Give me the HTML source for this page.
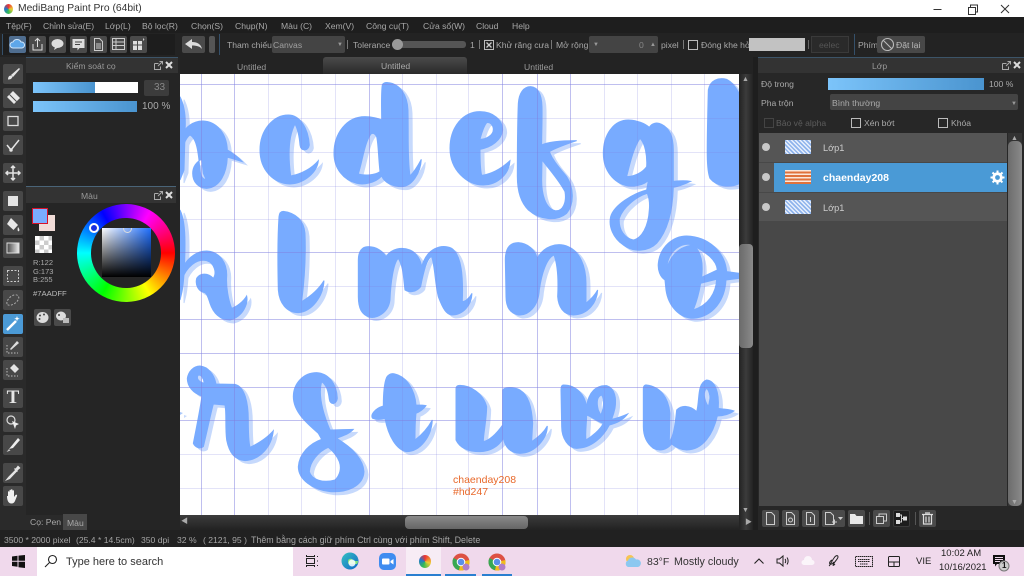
<!DOCTYPE html>
<html><head><meta charset="utf-8">
<style>
html,body{margin:0;padding:0;width:1024px;height:576px;overflow:hidden;background:#252525}
body{position:relative;font-family:"Liberation Sans","Noto Sans CJK SC",sans-serif;font-size:8.6px;color:#a8a8a8}
.a{position:absolute}
.t{position:absolute;white-space:nowrap;line-height:12px}
.b{position:absolute;background:#4a4a4a;border-radius:2px;width:17px;height:17px}
.tb{position:absolute;left:3px;width:20px;height:20px;background:#484848;border-radius:2px}
.tb svg,.b svg{position:absolute;left:0;top:0;width:100%;height:100%}
.sep{position:absolute;color:#888}
.bar{position:absolute;background:linear-gradient(to right,#7cc4fa,#4a94cf)}
.chk{position:absolute;width:8px;height:8px;border:1px solid #bbb}
.row{position:absolute;left:759px;width:248px;background:#555}
.dot{position:absolute;width:8px;height:8px;border-radius:50%;background:#c8c8c8}
.th{position:absolute;left:785px;width:26px;height:14px;background:repeating-linear-gradient(45deg,#8fb4ec 0 1.5px,#e9f0fc 1.5px 3px)}
svg{display:block}
</style></head><body>

<!-- title -->
<div class="a" style="left:0;top:0;width:1024px;height:17px;background:#fff"></div>
<div class="a" style="left:4px;top:4px;width:9px;height:10px;border-radius:50%;background:conic-gradient(#e33,#ec3 25%,#3b5 50%,#27c 75%,#e33)"></div>
<div class="t" style="left:18px;top:3px;color:#333;font-size:10.300px">MediBang Paint Pro (64bit)</div>
<svg class="a" style="left:930px;top:2px" width="90" height="14" fill="none" stroke="#333"><path d="M3.500 7.500h8"/><path d="M38.500 5.500h7v7h-7zM40.500 5V3h7v7h-2"/><path d="M71 3l8 8M79 3l-8 8"/></svg>

<!-- menu -->
<div class="a" style="left:0;top:17px;width:1024px;height:16px;background:#1e1e1e"></div>
<div class="t" style="left:6px;top:20px">Tệp(F)</div>
<div class="t" style="left:43px;top:20px">Chỉnh sửa(E)</div>
<div class="t" style="left:105px;top:20px">Lớp(L)</div>
<div class="t" style="left:142px;top:20px">Bộ lọc(R)</div>
<div class="t" style="left:191px;top:20px">Chọn(S)</div>
<div class="t" style="left:235px;top:20px">Chụp(N)</div>
<div class="t" style="left:281px;top:20px">Màu (C)</div>
<div class="t" style="left:325px;top:20px">Xem(V)</div>
<div class="t" style="left:366px;top:20px">Công cụ(T)</div>
<div class="t" style="left:423px;top:20px">Cửa sổ(W)</div>
<div class="t" style="left:476px;top:20px">Cloud</div>
<div class="t" style="left:512px;top:20px">Help</div>

<!-- toolbar -->
<div class="a" style="left:0;top:33px;width:1024px;height:24px;background:#232323"></div>
<div class="a" style="left:2px;top:34px;width:172px;height:21px;border-left:1px solid #35506a;background:#1d1d1d"></div>
<div class="b" style="left:9px;top:36px;background:#4f6d8f"><svg viewBox="0 0 17 17"><path d="M4 12a3 3 0 0 1 0-6 4.500 4.500 0 0 1 8 0 3 3 0 0 1 1 6z" fill="#5ea6e8" stroke="#cfe4f8"/></svg></div>
<div class="b" style="left:29px;top:36px"><svg viewBox="0 0 17 17" fill="none" stroke="#ddd"><path d="M4 8v6h9V8M8.500 11V3M6 5l2.500-2.500L11 5"/></svg></div>
<div class="b" style="left:49px;top:36px"><svg viewBox="0 0 17 17"><ellipse cx="8.500" cy="7.500" rx="6" ry="4.500" fill="#ddd"/><path d="M6 11l-1 3 4-2.500z" fill="#ddd"/></svg></div>
<div class="b" style="left:70px;top:36px"><svg viewBox="0 0 17 17"><path d="M2.500 3h12v9h-5l-2 2.500V12h-5z" fill="#ddd"/><path d="M5 6h7M5 8.500h5" stroke="#444"/></svg></div>
<div class="b" style="left:90px;top:36px"><svg viewBox="0 0 17 17" fill="none" stroke="#ccc"><path d="M4.500 2.500h5l3 3v9h-8zM6 8h5M6 10h5M6 12h5"/></svg></div>
<div class="b" style="left:110px;top:36px"><svg viewBox="0 0 17 17" fill="none" stroke="#ccc"><path d="M2.500 2.500h12v11h-12zM2.500 6h12M2.500 9.500h12M6 2.500v11"/></svg></div>
<div class="b" style="left:130px;top:36px"><svg viewBox="0 0 17 17"><path d="M3 5h4v3.500H3zM8 5h4v3.500H8zM3 9.500h4V14H3zM8 9.500h4V14H8z" fill="#ddd"/><path d="M13 2l1.500 1.500-1.500 1.500z" fill="#ccc"/></svg></div>
<div class="b" style="left:182px;top:36px;width:23px"><svg viewBox="0 0 23 17"><path d="M3 8l7-5v3c5 0 9 2 10 7-2-2.500-5-3.500-10-3.500V13z" fill="#ddd"/></svg></div>
<div class="a" style="left:209px;top:36px;width:6px;height:17px;background:#555;border-radius:2px"></div>
<div class="a" style="left:219px;top:34px;width:1px;height:21px;background:#35506a"></div>
<div class="t" style="left:227px;top:39px">Tham chiếu</div>
<div class="a" style="left:272px;top:36px;width:73px;height:17px;background:#444;border-radius:2px"></div>
<div class="t" style="left:273px;top:39px;color:#a0a0a0">Canvas</div>
<div class="t" style="left:337px;top:39px;font-size:6px;color:#999">▼</div>
<div class="a" style="left:347px;top:40px;width:1px;height:9px;background:#777"></div>
<div class="t" style="left:353px;top:39px">Tolerance</div>
<div class="a" style="left:392px;top:41px;width:74px;height:7px;background:#555;border-radius:3px"></div>
<div class="a" style="left:392px;top:39px;width:11px;height:11px;background:#999;border-radius:50%"></div>
<div class="t" style="left:470px;top:39px">1</div>
<div class="a" style="left:479px;top:40px;width:1px;height:9px;background:#777"></div>
<div class="chk" style="left:484px;top:40px"></div>
<svg class="a" style="left:484px;top:40px" width="10" height="10"><path d="M2.500 2.500l5 5M7.500 2.500l-5 5" stroke="#ccc" stroke-width="1.300"/></svg>
<div class="t" style="left:496px;top:39px">Khử răng cưa</div>
<div class="a" style="left:551px;top:40px;width:1px;height:9px;background:#777"></div>
<div class="t" style="left:556px;top:39px">Mở rộng</div>
<div class="a" style="left:589px;top:36px;width:69px;height:17px;background:#444;border-radius:2px"></div>
<div class="t" style="left:593px;top:39px;font-size:6px;color:#999">▼</div>
<div class="t" style="left:639px;top:39px;color:#888">0</div>
<div class="t" style="left:650px;top:39px;font-size:6px;color:#999">▲</div>
<div class="t" style="left:661px;top:39px">pixel</div>
<div class="a" style="left:683px;top:40px;width:1px;height:9px;background:#777"></div>
<div class="chk" style="left:688px;top:40px"></div>
<div class="t" style="left:701px;top:39px">Đóng khe hở</div>
<div class="a" style="left:749px;top:38px;width:56px;height:13px;background:#c2c2c2"></div>
<div class="a" style="left:808px;top:40px;width:1px;height:9px;background:#666"></div>
<div class="a" style="left:811px;top:36px;width:38px;height:17px;background:#2a2a2a;border:1px solid #3a3a3a;box-sizing:border-box"></div>
<div class="t" style="left:819px;top:39px;color:#555">eelec</div>
<div class="a" style="left:854px;top:34px;width:1px;height:21px;background:#35506a"></div>
<div class="t" style="left:858px;top:39px">Phím</div>
<div class="a" style="left:877px;top:36px;width:48px;height:17px;background:#484848;border-radius:2px"></div>
<svg class="a" style="left:880px;top:37px" width="15" height="15" fill="none" stroke="#bbb" stroke-width="1.100"><circle cx="7.500" cy="7.500" r="6"/><path d="M3.500 3.500l8 8"/></svg>
<div class="t" style="left:896px;top:39px;color:#bbb">Đặt lại</div>

<!-- left toolbox bg -->
<div class="a" style="left:0;top:57px;width:26px;height:473px;background:#2a2a2a"></div>

<div class="tb" style="top:64px"><svg viewBox="0 0 20 20"><path d="M16 4L8 11l2 2 7-8z" fill="#e4e4e4"/><path d="M8 11.500c-2 0-3 1.500-3 4 2 0 4-.5 4.500-3z" fill="#e4e4e4"/></svg></div>
<div class="tb" style="top:88px"><svg viewBox="0 0 20 20"><path d="M10 3l7 7-6 6-7-7z" fill="#e8e8e8"/><path d="M6.500 6.500l7 7" stroke="#484848"/></svg></div>
<div class="tb" style="top:111px"><svg viewBox="0 0 20 20"><path d="M5 5.500h10v9H5z" fill="none" stroke="#ddd" stroke-width="1.300"/></svg></div>
<div class="tb" style="top:135px"><svg viewBox="0 0 20 20" fill="none" stroke="#e4e4e4" stroke-width="1.500"><path d="M4 10l4 5L16 5"/><circle cx="8" cy="15" r="1" fill="#ddd"/></svg></div>
<div class="tb" style="top:163px"><svg viewBox="0 0 20 20" fill="none" stroke="#e4e4e4" stroke-width="1.500"><path d="M10 3v14M3 10h14M8 5l2-2 2 2M8 15l2 2 2-2M5 8l-2 2 2 2M15 8l2 2-2 2"/></svg></div>
<div class="tb" style="top:191px"><svg viewBox="0 0 20 20"><path d="M5 5h10v10H5z" fill="#e4e4e4"/></svg></div>
<div class="tb" style="top:215px"><svg viewBox="0 0 20 20"><path d="M8 3l7 7-4.500 5L4 9z" fill="#e8e8e8"/><path d="M15 12c1 1.500 2 3 1 4s-2-.5-1-4z" fill="#e8e8e8"/></svg></div>
<div class="tb" style="top:238px"><svg viewBox="0 0 20 20"><defs><linearGradient id="g1"><stop offset="0" stop-color="#444"/><stop offset="1" stop-color="#eee"/></linearGradient></defs><rect x="4" y="5" width="12" height="10" fill="url(#g1)" stroke="#ddd"/></svg></div>
<div class="tb" style="top:266px"><svg viewBox="0 0 20 20"><path d="M4.500 4.500h11v11h-11z" fill="none" stroke="#ccc" stroke-dasharray="2 1.500"/></svg></div>
<div class="tb" style="top:290px"><svg viewBox="0 0 20 20"><path d="M4 14c-1-3 3-8 7-9 4-1 6 2 4 5-2 4-9 7-11 4z" fill="none" stroke="#aaa" stroke-dasharray="2 1.500"/></svg></div>
<div class="tb" style="top:314px;background:#4b9ad6"><svg viewBox="0 0 20 20"><path d="M4 16L13 7" stroke="#fff" stroke-width="2.500"/><path d="M14 2l.7 2 2 .7-2 .7-.7 2-.7-2-2-.7 2-.7z" fill="#fff"/></svg></div>
<div class="tb" style="top:337px"><svg viewBox="0 0 20 20"><path d="M7 12l7-8 2 2-8 7z" fill="#ddd"/><path d="M4 8v8h11" fill="none" stroke="#bbb" stroke-dasharray="1.500 1.500"/></svg></div>
<div class="tb" style="top:360px"><svg viewBox="0 0 20 20"><path d="M11 4l5 5-4 4-5-5z" fill="#e4e4e4"/><path d="M4 8v8h11" fill="none" stroke="#bbb" stroke-dasharray="1.500 1.500"/></svg></div>
<div class="tb" style="top:388px"><div class="a" style="left:3px;top:0;width:14px;text-align:center;font:bold 19px/20px 'Liberation Serif',serif;color:#e6e6e6">T</div></div>
<div class="tb" style="top:412px"><svg viewBox="0 0 20 20"><circle cx="8" cy="8" r="4" fill="none" stroke="#ddd" stroke-width="1.200"/><path d="M9 9l7 3-3 1.500L12 17z" fill="#eee"/></svg></div>
<div class="tb" style="top:435px"><svg viewBox="0 0 20 20"><path d="M15 3l2 2-7 8-4 1z" fill="#eee"/><path d="M6 14l-2.500 3 4-1.500" fill="#ccc"/></svg></div>
<div class="tb" style="top:463px"><svg viewBox="0 0 20 20" fill="none" stroke="#e4e4e4" stroke-width="1.300"><path d="M13 7l-7 7-2 2.500 2.500-1 7-7.500"/><path d="M11.500 5.500l3 3M13 6l2-2.500 1.500 1.500L14 7" fill="#e4e4e4"/></svg></div>
<div class="tb" style="top:486px"><svg viewBox="0 0 20 20"><path d="M5 10V6c0-1 1.500-1 1.500 0v3V4.500c0-1 1.500-1 1.500 0V9V4c0-1 1.500-1 1.500 0v5V5c0-1 1.500-1 1.500 0v6l1.500-2c1-1 2 0 1.500 1l-2 5c-.5 1.500-2 2.500-3.500 2.500-3 0-4.500-3-4.500-7.500z" fill="#f0f0f0"/></svg></div>

<!-- left panels -->
<div class="a" style="left:26px;top:57px;width:152px;height:473px;background:#252525"></div>
<div class="a" style="left:26px;top:57px;width:152px;height:16px;background:#333;border-top:1px solid #3c5468;box-sizing:border-box"></div>
<div class="t" style="left:66px;top:60px;color:#999">Kiểm soát cọ</div>
<svg class="a" style="left:153px;top:60px" width="22" height="11"><path d="M1.500 3.500h4M1.500 3.500v6h6v-3M5 6l4-4M6.500 1.500h3v3" fill="none" stroke="#aaa"/><path d="M13 2l6 6M19 2l-6 6" stroke="#ddd" stroke-width="2"/></svg>
<div class="a" style="left:33px;top:82px;width:105px;height:11px;background:#fff"></div>
<div class="bar" style="left:33px;top:82px;width:62px;height:11px"></div>
<div class="a" style="left:144px;top:80px;width:25px;height:16px;background:#3c3c3c;border-radius:2px"></div>
<div class="t" style="left:154px;top:82px;color:#888;font-size:10px">33</div>
<div class="bar" style="left:33px;top:101px;width:104px;height:11px"></div>
<div class="t" style="left:142px;top:101px;font-size:10px;color:#aaa">100 %</div>

<div class="a" style="left:26px;top:186px;width:150px;height:17px;background:#333;border-top:1px solid #4a6478;box-sizing:border-box"></div>
<div class="t" style="left:81px;top:190px;color:#999">Màu</div>
<svg class="a" style="left:153px;top:190px" width="22" height="11"><path d="M1.500 3.500h4M1.500 3.500v6h6v-3M5 6l4-4M6.500 1.500h3v3" fill="none" stroke="#aaa"/><path d="M13 2l6 6M19 2l-6 6" stroke="#ddd" stroke-width="2"/></svg>

<div class="a" style="left:39px;top:215px;width:16px;height:16px;background:#f1dcd8"></div>
<div class="a" style="left:32px;top:208px;width:14px;height:14px;background:#7AADFF;border:1px solid #d8122a;box-sizing:content-box"></div>
<div class="a" style="left:35px;top:236px;width:17px;height:17px;background:conic-gradient(#ccc 25%,#fff 0 50%,#ccc 0 75%,#fff 0) 0 0/9px 9px"></div>
<div class="t" style="left:33px;top:259px;font-size:7.500px;line-height:8.500px;color:#aaa">R:122<br>G:173<br>B:255</div>
<div class="t" style="left:33px;top:288px;font-size:7.700px;color:#bbb">#7AADFF</div>

<div class="a" style="left:77px;top:204px;width:98px;height:98px;border-radius:50%;background:conic-gradient(from 30deg,#f0f,#f00 60deg,#ff0 120deg,#0f0 180deg,#0ff 240deg,#00f 300deg,#f0f 360deg)"></div>
<div class="a" style="left:91px;top:218px;width:70px;height:70px;border-radius:50%;background:#252525"></div>
<div class="a" style="left:102px;top:228px;width:49px;height:49px;background:linear-gradient(to top,#000,rgba(0,0,0,0)),linear-gradient(to right,#fff,#1f6fff)"></div>
<div class="a" style="left:89px;top:223px;width:6px;height:6px;border:2px solid #fff;border-radius:50%;background:#1a2fe0"></div>
<div class="a" style="left:123px;top:224px;width:7px;height:7px;border:1.500px solid #ddd;border-radius:50%;clip-path:inset(4px 0 0 0)"></div>

<div class="b" style="left:34px;top:309px"><svg viewBox="0 0 17 17"><ellipse cx="8.500" cy="8.500" rx="6" ry="5.500" fill="#ddd"/><circle cx="6" cy="6.500" r="1" fill="#444"/><circle cx="10" cy="5.500" r="1" fill="#444"/><circle cx="5.500" cy="10" r="1" fill="#444"/></svg></div>
<div class="b" style="left:54px;top:309px"><svg viewBox="0 0 17 17"><ellipse cx="7" cy="7" rx="5" ry="4.500" fill="#ddd"/><rect x="9" y="9" width="6" height="5" fill="#bbb"/><circle cx="5" cy="6" r="1" fill="#444"/></svg></div>

<div class="a" style="left:26px;top:515px;width:37px;height:15px;background:#2a2a2a"></div>
<div class="t" style="left:30px;top:516px;color:#aaa">Cọ: Pen</div>
<div class="a" style="left:63px;top:514px;width:24px;height:16px;background:#484848"></div>
<div class="t" style="left:67px;top:517px;color:#aaa">Màu</div>

<!-- tabs -->
<div class="a" style="left:180px;top:57px;width:578px;height:17px;background:#232323"></div>
<div class="a" style="left:323px;top:57px;width:144px;height:17px;background:linear-gradient(#4a4a4a,#2a2a2a);border-radius:3px 3px 0 0"></div>
<div class="t" style="left:237px;top:61px;color:#9a9a9a">Untitled</div>
<div class="t" style="left:381px;top:60px;color:#aaa">Untitled</div>
<div class="t" style="left:524px;top:61px;color:#9a9a9a">Untitled</div>

<!-- canvas -->
<div class="a" style="left:180px;top:74px;width:559px;height:441px;background:#fff;overflow:hidden">
<svg class="a" style="left:-180px;top:-74px;filter:drop-shadow(4px 3px 0 #c6d9fc)" width="1024" height="576" fill="#78abff" fill-rule="evenodd" stroke="#78abff" stroke-width="3">
<g transform="translate(180 70) scale(.3333)">
<path d="M0,80C10,100 16,130 16,160L12,300L0,330Z"/>
<path d="M0,205C15,170 40,152 70,153C110,155 140,190 142,240C160,250 175,262 187,275C170,270 155,265 142,262C140,310 120,352 80,355C55,355 38,335 38,310C38,290 50,275 65,268L70,310L78,328C68,328 62,320 60,300C55,245 50,205 30,195C15,205 5,240 0,260Z"/>
<path d="M325,135C360,135 385,175 388,225C385,245 362,245 360,225C358,200 352,175 345,162C330,190 322,240 332,318C365,312 395,295 415,272C412,305 375,340 330,342C280,340 240,300 240,240C240,180 280,135 325,135Z"/>
<path d="M625,38C660,42 682,75 684,120C686,200 682,260 690,318C703,305 715,285 724,268C722,310 695,350 665,350C640,350 615,340 605,318C585,340 550,345 530,340C490,330 462,295 462,250C462,190 500,140 555,140C575,140 595,145 605,150C605,110 603,70 607,45C610,38 618,37 625,38ZM573,192C555,215 548,270 535,312C555,318 585,315 600,305C595,260 595,220 590,200C585,190 578,188 573,192Z"/>
<path d="M0,610C15,570 45,543 80,543C120,545 142,580 140,620C138,650 145,690 155,715C170,710 190,695 200,678C205,700 190,740 150,750C120,750 100,730 90,700C85,685 82,672 75,668C55,665 45,645 50,625C60,608 85,608 100,625C110,610 105,580 80,572C50,565 20,590 5,630L0,690Z"/>
<path d="M0,420C10,440 15,480 15,520C15,570 12,640 5,670L0,690Z"/>
<path d="M310,424C345,428 372,450 375,490C378,560 372,640 365,695C390,680 415,660 432,632C430,680 395,725 355,728C320,728 298,700 295,660C293,580 293,500 297,440C298,428 303,424 310,424Z"/>
<path d="M565,530C590,530 610,545 618,560C635,535 665,530 690,540C710,548 722,570 725,590C740,535 785,520 815,535C845,555 850,620 847,695C855,695 868,685 876,670C875,705 850,735 815,735C800,733 790,720 775,680C765,640 765,590 755,560C740,565 730,610 722,650C710,665 690,670 675,660C670,620 670,590 655,565C640,580 632,640 630,690C625,730 590,745 570,742C545,735 535,715 535,680L535,570C535,545 545,530 565,530Z"/>
</g>
<g transform="translate(460 70) scale(.3333)">
<path d="M60,125C100,125 128,150 128,180C125,210 95,232 60,238C60,265 60,295 65,316C95,312 125,295 150,272C148,310 115,345 70,345C20,345 -30,300 -30,235C-30,170 10,125 60,125ZM80,158C70,170 65,190 60,208C80,208 100,195 100,178C100,165 90,155 80,158Z"/>
<path d="M212,50C235,52 245,75 246,110C247,150 245,190 245,225C265,215 300,212 350,212C320,222 290,232 268,245C280,275 300,295 320,320C340,350 345,400 320,430C290,455 240,450 205,420C180,395 172,360 172,320C172,240 172,170 175,100C177,70 190,50 212,50ZM245,330C245,370 255,415 285,422C310,425 320,395 315,365C300,335 270,300 246,270Z"/>
<path d="M505,150C530,150 555,160 568,172C575,160 590,155 605,163C630,175 640,205 640,240L640,334C660,332 680,332 692,334C675,342 655,350 640,352C638,420 625,480 590,520C565,545 520,548 490,525C460,505 445,470 452,440C462,405 520,370 560,360L565,332C550,345 530,350 505,348C460,340 430,300 430,250C430,195 460,150 505,150ZM540,205C520,235 510,280 500,320C525,320 550,305 560,290C562,255 555,220 540,205ZM562,370C530,380 490,410 478,445C475,480 495,505 520,510C545,505 565,470 568,420C570,400 568,385 562,370Z"/>
<path d="M745,60C750,30 775,22 800,28C815,35 830,55 840,75L840,340C810,355 770,350 750,325C740,300 740,260 745,60Z"/>
<path d="M175,518C205,520 225,540 232,565C250,530 290,515 325,530C360,545 378,590 378,640L378,700C390,690 405,675 413,660C412,695 385,735 340,735C310,735 295,710 293,680C295,640 295,590 282,555C260,565 245,610 238,660C235,710 205,738 175,735C150,730 138,710 138,680L136,570C136,535 150,518 175,518Z"/>
<path d="M680,498C745,500 795,545 800,605L840,610L840,625L798,630C795,690 760,740 700,745C660,745 625,710 618,660L615,630C600,620 593,600 595,580C600,530 640,498 680,498ZM700,525C665,515 625,540 620,595C630,565 650,530 700,525ZM705,530C735,545 770,570 772,600L725,622C730,580 725,550 705,530ZM722,640L770,628C768,670 745,705 700,720C710,695 718,665 722,640Z"/>
</g>
<g transform="translate(180 340) scale(.3333)">
<path d="M60,78C85,80 103,105 108,132L165,133C195,140 205,190 205,240C205,270 205,300 210,322C235,310 260,295 280,272C275,320 240,360 195,362C165,360 148,340 140,300C135,260 140,220 135,195L100,192C90,230 80,280 70,320C60,328 45,322 40,310C48,270 60,210 66,168C40,160 22,140 22,115C25,95 40,78 60,78ZM55,105C48,115 55,125 72,130C72,115 65,105 55,105Z"/>
<path d="M410,98C445,100 470,130 472,175C470,195 450,195 448,178C445,155 440,135 425,125C415,160 425,210 450,270C475,270 500,268 520,268C510,280 495,285 470,295C520,325 550,360 552,395C550,440 500,458 450,455C400,450 355,420 355,380C358,340 390,310 425,298L415,280C380,250 340,215 340,170C340,130 370,98 410,98ZM445,322C415,335 390,365 388,395C395,420 430,430 465,420C480,405 485,385 478,365C470,345 455,330 445,322Z"/>
<path d="M645,102C680,110 705,150 708,195C720,195 730,195 738,197C730,208 720,215 708,220C705,250 705,280 705,300C725,285 745,262 757,240C755,290 720,335 680,335C650,330 625,290 615,235C605,238 590,240 578,235C570,225 585,205 610,198C610,170 612,130 620,112C628,100 638,100 645,102Z"/>
</g>
<g transform="translate(460 340) scale(.3333)">
<path d="M-2,136C30,135 70,160 80,200C80,240 70,280 70,305C90,300 110,280 128,255L128,150C135,140 160,140 180,150C205,165 215,200 218,250L215,305C230,295 250,280 262,258C262,295 225,340 180,340C150,340 135,320 130,295C115,320 90,335 60,335C25,335 0,325 -12,300L-12,145C-12,140 -8,136 -2,136Z"/>
<path d="M310,135C350,135 375,165 380,200C385,155 410,135 440,137C465,145 470,175 465,205C462,220 458,230 455,238C470,235 490,228 503,222C490,240 470,250 448,255C430,290 395,325 350,325C325,325 305,295 305,260L303,150C303,140 305,135 310,135ZM425,165C410,170 410,190 415,210L422,225C430,210 435,180 425,165ZM380,225C380,250 375,280 378,300C395,290 420,270 430,250C412,245 395,230 380,225Z"/>
<path d="M560,135C600,140 625,170 630,220L628,305C640,290 645,260 650,210C665,195 690,195 710,215C720,180 710,130 740,120C765,122 778,155 775,205C790,208 810,208 822,213C805,225 790,228 772,228C760,280 730,330 680,330C660,330 645,320 635,312C620,330 600,335 580,325C560,310 550,290 550,260L550,145C550,138 555,134 560,135ZM740,145C730,155 730,175 745,200C752,175 750,155 740,145Z"/>
</g>
<path d="M180,412l3,1-3,2z" fill="#a9c8fb" stroke="none"/>
</svg>
<svg class="a" style="left:-180px;top:-74px" width="1024" height="576" stroke="#8080e0" stroke-width="1">
<g stroke-opacity=".5">
<path d="M201.500 74V515M234.500 74V515M369.500 74V515M502.500 74V515M537.500 74V515M570.500 74V515"/>
<path d="M180 84.500H739M180 252.500H739M180 319.500H739M180 353.500H739M180 387.500H739M180 420.500H739"/>
</g>
<g stroke-opacity=".22">
<path d="M268.500 74V515M301.500 74V515M335.500 74V515M402.500 74V515M436.500 74V515M468.500 74V515M604.500 74V515M637.500 74V515M671.500 74V515M704.500 74V515"/>
<path d="M180 118.500H739M180 152.500H739M180 186.500H739M180 219.500H739M180 286.500H739M180 454.500H739M180 488.500H739"/>
</g>
</svg>
<div class="t" style="left:273px;top:401px;color:#e8682a;font-size:10.500px;line-height:11.500px">chaenday208<br>#hd247</div>
</div>

<!-- canvas scrollbars -->
<div class="a" style="left:739px;top:74px;width:14px;height:456px;background:linear-gradient(to right,#222,#3c3c3c 50%,#222)"></div>
<div class="a" style="left:739px;top:244px;width:14px;height:104px;background:linear-gradient(to right,#6a6a6a,#8a8a8a);border-radius:4px"></div>
<div class="t" style="left:742px;top:74px;font-size:7px;color:#aaa">▲</div>
<div class="t" style="left:742px;top:505px;font-size:7px;color:#aaa">▼</div>
<div class="a" style="left:180px;top:515px;width:559px;height:15px;background:linear-gradient(#3c3c3c,#222)"></div>
<div class="a" style="left:405px;top:516px;width:123px;height:13px;background:linear-gradient(#8a8a8a,#666);border-radius:4px"></div>
<div class="t" style="left:181px;top:516px;font-size:7px;color:#aaa">◀</div>
<div class="t" style="left:745px;top:517px;font-size:7px;color:#aaa">▶</div>
<div class="a" style="left:753px;top:57px;width:5px;height:473px;background:#1e1e1e"></div>

<!-- right panel -->
<div class="a" style="left:758px;top:57px;width:266px;height:473px;background:#272727"></div>
<div class="a" style="left:758px;top:57px;width:266px;height:16px;background:#333;border-top:1px solid #3c5468;box-sizing:border-box"></div>
<div class="t" style="left:872px;top:60px;color:#999">Lớp</div>
<svg class="a" style="left:1001px;top:60px" width="22" height="11"><path d="M1.500 3.500h4M1.500 3.500v6h6v-3M5 6l4-4M6.500 1.500h3v3" fill="none" stroke="#aaa"/><path d="M13 2l6 6M19 2l-6 6" stroke="#ddd" stroke-width="2"/></svg>
<div class="t" style="left:761px;top:78px;color:#aaa">Độ trong</div>
<div class="bar" style="left:828px;top:78px;width:156px;height:12px"></div>
<div class="t" style="left:989px;top:78px;color:#aaa">100 %</div>
<div class="t" style="left:761px;top:97px;color:#aaa">Pha trộn</div>
<div class="a" style="left:830px;top:94px;width:188px;height:16px;background:#444;border-radius:2px"></div>
<div class="t" style="left:832px;top:97px;color:#aaa">Bình thường</div>
<div class="t" style="left:1011px;top:98px;font-size:6px;color:#999">▼</div>
<div class="chk" style="left:764px;top:118px;border-color:#444"></div>
<div class="t" style="left:776px;top:117px;color:#5c5c5c">Bảo vệ alpha</div>
<div class="chk" style="left:851px;top:118px"></div>
<div class="t" style="left:864px;top:117px;color:#aaa">Xén bớt</div>
<div class="chk" style="left:938px;top:118px"></div>
<div class="t" style="left:951px;top:117px;color:#aaa">Khóa</div>

<div class="a" style="left:759px;top:133px;width:248px;height:373px;background:#484848"></div>
<div class="row" style="top:133px;height:29px"></div>
<div class="row" style="top:163px;height:29px"></div>
<div class="a" style="left:774px;top:163px;width:233px;height:29px;background:#4a9ad6"></div>
<div class="row" style="top:193px;height:28px"></div>
<div class="dot" style="left:762px;top:143px"></div>
<div class="dot" style="left:762px;top:173px"></div>
<div class="dot" style="left:762px;top:203px"></div>
<div class="th" style="top:140px"></div>
<div class="th" style="top:170px;background:repeating-linear-gradient(0deg,#e0723c 0 2px,#fbe8dc 2px 3.500px)"></div>
<div class="th" style="top:200px"></div>
<div class="t" style="left:823px;top:142px;color:#ccc;font-size:9.200px">Lớp1</div>
<div class="t" style="left:823px;top:172px;color:#fff;font-size:10.500px;font-weight:bold">chaenday208</div>
<div class="t" style="left:823px;top:202px;color:#ccc;font-size:9.200px">Lớp1</div>
<svg class="a" style="left:990px;top:170px" width="15" height="15"><circle cx="7.500" cy="7.500" r="3.800" fill="none" stroke="#fff" stroke-width="2.800"/><path d="M7.500 .5v14M.5 7.500h14M2.500 2.500l10 10M12.500 2.500l-10 10" stroke="#fff" stroke-width="2" stroke-dasharray="2.500 9"/></svg>

<div class="a" style="left:1008px;top:133px;width:14px;height:373px;background:#333"></div>
<div class="a" style="left:1008px;top:141px;width:14px;height:365px;background:linear-gradient(to right,#6c6c6c,#8a8a8a);border-radius:5px"></div>
<div class="t" style="left:1011px;top:133px;font-size:7px;color:#aaa">▲</div>
<div class="t" style="left:1011px;top:497px;font-size:7px;color:#aaa">▼</div>

<div class="b" style="left:762px;top:510px"><svg viewBox="0 0 17 17" fill="none" stroke="#ccc"><path d="M4.500 2.500h5l3 3v9h-8z"/></svg></div>
<div class="b" style="left:782px;top:510px"><svg viewBox="0 0 17 17" fill="none" stroke="#ccc"><path d="M4.500 2.500h5l3 3v9h-8z"/><circle cx="8.500" cy="10" r="2"/></svg></div>
<div class="b" style="left:802px;top:510px"><svg viewBox="0 0 17 17" fill="none" stroke="#ccc"><path d="M4.500 2.500h5l3 3v9h-8zM8.500 12V7"/></svg></div>
<div class="b" style="left:822px;top:510px;width:23px"><svg viewBox="0 0 23 17" fill="none" stroke="#ccc"><path d="M3.500 2.500h5l3 3v9h-8zM10 12h5M12.500 9.500v5"/><path d="M16 7h5l-2.500 3z" fill="#ccc" stroke="none"/></svg></div>
<div class="b" style="left:848px;top:510px"><svg viewBox="0 0 17 17"><path d="M2 4h5l1.500 2H15v8H2z" fill="#e8e8e8"/></svg></div>
<div class="b" style="left:873px;top:510px"><svg viewBox="0 0 17 17" fill="none" stroke="#ccc"><path d="M3.500 6.500h7v7h-7zM6 6.500V4h7.500v7h-3"/></svg></div>
<div class="b" style="left:893px;top:510px;background:#1c1c1c;border:1px solid #3a3a3a;box-sizing:border-box"><svg viewBox="0 0 15 15"><path d="M2 2h4v4H2zM2 9h4v4H2zM9 5.500h4v4H9z" fill="#ddd"/><path d="M6 4h1.500v7H6M7.500 7.500H9" stroke="#ccc" fill="none"/></svg></div>
<div class="b" style="left:919px;top:510px"><svg viewBox="0 0 17 17" fill="none" stroke="#ddd" stroke-width="1.200"><path d="M3 4.500h11M6 3h5M4.500 5v9h8V5M7 6.500v6M10 6.500v6"/></svg></div>
<div class="a" style="left:869px;top:512px;width:1px;height:13px;background:#555"></div>
<div class="a" style="left:915px;top:512px;width:1px;height:13px;background:#555"></div>

<!-- status -->
<div class="a" style="left:0;top:530px;width:1024px;height:17px;background:#212121"></div>
<div class="t" style="left:4px;top:534px;color:#a5a5a5">3500 * 2000 pixel</div>
<div class="t" style="left:76px;top:534px;color:#a5a5a5">(25.4 * 14.5cm)</div>
<div class="t" style="left:141px;top:534px;color:#a5a5a5">350 dpi</div>
<div class="t" style="left:177px;top:534px;color:#a5a5a5">32 %</div>
<div class="t" style="left:203px;top:534px;color:#a5a5a5">( 2121, 95 )</div>
<div class="t" style="left:251px;top:534px;color:#a5a5a5;font-size:8.900px">Thêm bằng cách giữ phím Ctrl cùng với phím Shift, Delete</div>

<!-- taskbar -->
<div class="a" style="left:0;top:547px;width:1024px;height:29px;background:#f0d9ec"></div>
<svg class="a" style="left:12px;top:555px" width="13" height="13" fill="#111"><path d="M0 1.500L5.500 .8v5H0zM6.500 .6L13 0v5.800H6.500zM0 6.800h5.500v5L0 11zM6.500 6.800H13V13l-6.500-.8z"/></svg>
<div class="a" style="left:37px;top:547px;width:256px;height:29px;background:#fff"></div>
<svg class="a" style="left:44px;top:554px" width="14" height="14" fill="none" stroke="#222" stroke-width="1.100"><circle cx="8.500" cy="5.500" r="4"/><path d="M5.500 8.500L1 13"/></svg>
<div class="t" style="left:66px;top:556px;color:#333;font-size:11px">Type here to search</div>
<svg class="a" style="left:305px;top:554px" width="14" height="14" fill="none" stroke="#222"><path d="M1.500 1v1.500h8V1M1.500 13v-1.500h8V13M1.500 4.500h8v5h-8zM12.500 2v1M12.500 6.500v1M12.500 11v1"/></svg>
<svg class="a" style="left:341px;top:552px" width="18" height="18"><defs><linearGradient id="ed" x1="0" y1="0" x2="1" y2="1"><stop offset="0" stop-color="#35c1c1"/><stop offset="1" stop-color="#1068c8"/></linearGradient></defs><circle cx="9" cy="9" r="8.500" fill="url(#ed)"/><path d="M7 9c0-3 5-3 5 0h5c0-2-1-3-2-4 3 3 2 6 1 7H8c-1 0-1-2-1-3z" fill="#7fe27f"/><circle cx="11" cy="11" r="3.500" fill="#fff" opacity=".85"/></svg>
<div class="a" style="left:379px;top:553px;width:17px;height:17px;border-radius:5px;background:#3f8cf0"></div>
<svg class="a" style="left:379px;top:553px" width="17" height="17" fill="#fff"><rect x="3" y="5.500" width="7.500" height="6" rx="1"/><path d="M11.500 8l3-2v5.500l-3-2z"/></svg>
<div class="a" style="left:406px;top:547px;width:35px;height:29px;background:#f7ecf5"></div>
<div class="a" style="left:419px;top:555px;width:12px;height:13px;border-radius:50%;background:conic-gradient(#e33,#ec3 30%,#3b5 55%,#27c 80%,#e33)"></div>
<svg class="a" style="left:451px;top:552px" width="20" height="20"><circle cx="10" cy="10" r="8.500" fill="#dd5144"/><path d="M10 10L2.500 6A8.500 8.500 0 0 0 8 18.300z" fill="#38a852"/><path d="M10 10l8.300-2A8.500 8.500 0 0 1 8 18.300z" fill="#f1bc1a"/><circle cx="10" cy="10" r="3.800" fill="#5b8fe8" stroke="#fff"/><circle cx="15" cy="15" r="3.500" fill="#b07ec8"/></svg>
<svg class="a" style="left:487px;top:552px" width="20" height="20"><circle cx="10" cy="10" r="8.500" fill="#dd5144"/><path d="M10 10L2.500 6A8.500 8.500 0 0 0 8 18.300z" fill="#38a852"/><path d="M10 10l8.300-2A8.500 8.500 0 0 1 8 18.300z" fill="#f1bc1a"/><circle cx="10" cy="10" r="3.800" fill="#5b8fe8" stroke="#fff"/><circle cx="15" cy="15" r="3.500" fill="#b07ec8"/></svg>
<div class="a" style="left:406px;top:574px;width:35px;height:2px;background:#2a7fd0"></div>
<div class="a" style="left:445px;top:574px;width:31px;height:2px;background:#2a7fd0"></div>
<div class="a" style="left:482px;top:574px;width:30px;height:2px;background:#2a7fd0"></div>

<svg class="a" style="left:623px;top:553px" width="19" height="17"><circle cx="7" cy="6" r="4" fill="#f6c453"/><path d="M5 14a3.500 3.500 0 0 1 0-6.500 4.500 4.500 0 0 1 8-1 3.500 3.500 0 0 1 2 7.500z" fill="#8cc8f0"/></svg>
<div class="t" style="left:647px;top:556px;color:#333;font-size:10.500px">83°F</div>
<div class="t" style="left:674px;top:556px;color:#333;font-size:10.700px">Mostly cloudy</div>
<svg class="a" style="left:753px;top:557px" width="12" height="8" fill="none" stroke="#222" stroke-width="1.100"><path d="M1.500 6.500L6 2l4.500 4.500"/></svg>
<svg class="a" style="left:776px;top:554px" width="13" height="14" fill="none" stroke="#222"><path d="M1 5h2.500L7 2v10L3.500 9H1zM9 5c1 1 1 3 0 4M11 3.500c1.500 2 1.500 5 0 7"/></svg>
<svg class="a" style="left:801px;top:556px" width="14" height="10"><path d="M3 9a2.500 2.500 0 0 1 0-5 4 4 0 0 1 8 0 2.500 2.500 0 0 1 0 5z" fill="#fbf5fa"/></svg>
<svg class="a" style="left:827px;top:553px" width="14" height="16" fill="none" stroke="#222"><path d="M2 13c1.500-1 2-4 5-8 2-3 4-3 4-1 0 2-4 5-5 8 0 1 1 0 2-1M5 7c-2 1-3 3-2 4s3-1 4-2"/></svg>
<svg class="a" style="left:855px;top:556px" width="18" height="11" fill="none" stroke="#222"><path d="M.5.500h17v10H.5zM3 3.500h12M3 5.500h12M5 8h8" stroke-dasharray="1.500 .5"/></svg>
<svg class="a" style="left:888px;top:556px" width="12" height="11" fill="none" stroke="#222"><path d="M.5 1.500a1 1 0 0 1 1-1h9a1 1 0 0 1 1 1v8a1 1 0 0 1-1 1h-9a1 1 0 0 1-1-1zM.5 6h11M6 6v4.500"/></svg>
<div class="t" style="left:916px;top:556px;color:#222;font-size:9.500px">VIE</div>
<div class="t" style="left:941px;top:548px;color:#222;font-size:9.500px">10:02 AM</div>
<div class="t" style="left:939px;top:562px;color:#222;font-size:9.500px">10/16/2021</div>
<svg class="a" style="left:992px;top:555px" width="18" height="17"><path d="M0 0h12v9H4l-2 2.500V9H0z" fill="#111" transform="translate(1 0)"/><path d="M3 2.500h8M3 4.500h8M3 6.500h5" stroke="#f0d9ec"/><circle cx="12" cy="11" r="5" fill="#ccc" stroke="#777"/></svg>
<div class="t" style="left:1002px;top:560px;color:#111;font-size:8px;font-weight:bold">1</div>

</body></html>
